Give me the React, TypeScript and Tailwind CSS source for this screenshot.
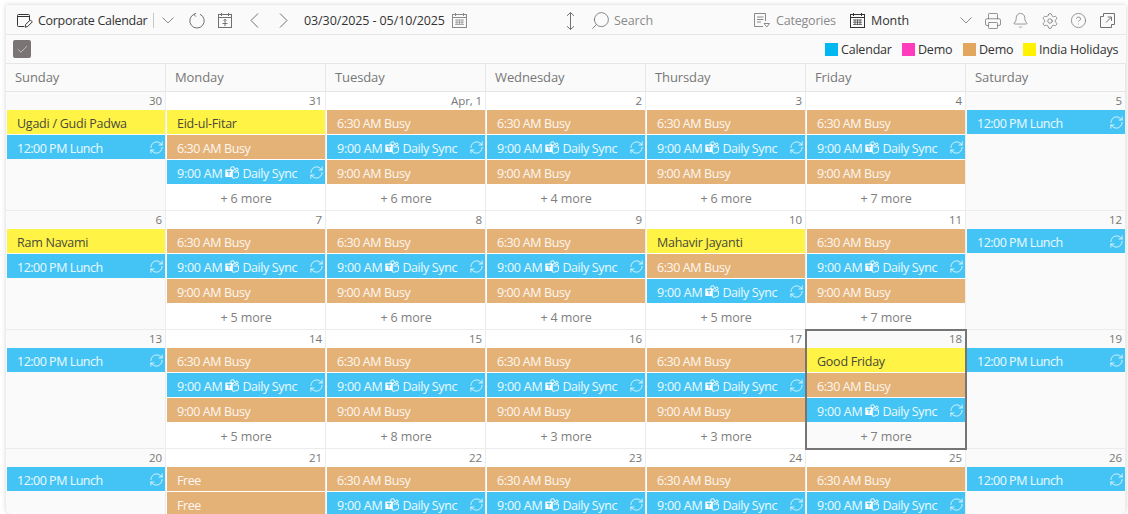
import React from "react";
import { Search, Printer, Bell, Settings, CircleHelp, RefreshCw, Check } from "lucide-react";

const Teams = () => (
  <svg width="14" height="14" viewBox="0 0 14 14" className="ml-[3px] mr-[3px] mt-[2px] shrink-0" fill="none">
    <circle cx="7.6" cy="2.6" r="1.9" stroke="#fff" strokeWidth="1" />
    <circle cx="11.8" cy="3.4" r="1.3" stroke="#fff" strokeWidth="1" />
    <path d="M8.5 6h5v3.6a2.4 2.4 0 0 1-4 1.6" stroke="#fff" strokeWidth="1" />
    <path d="M6.5 5.5v4.2a3 3 0 0 0 3 2.8" stroke="#fff" strokeWidth="1" />
    <rect x="0.3" y="3.5" width="7.5" height="7.5" rx="0.6" fill="#fff" />
    <path d="M2 5.4h4M4 5.4v4" stroke="#43c4f5" strokeWidth="1.1" />
  </svg>
);

const EditCal = () => (
  <svg width="16" height="14" viewBox="0 0 16 14" fill="none" stroke="#333" strokeWidth="1" className="shrink-0">
    <path d="M7 12.5H1.5a1 1 0 0 1-1-1V1.5a1 1 0 0 1 1-1h10a1 1 0 0 1 1 1V6" />
    <path d="M.5 2.5h12" />
    <path d="M8 13.2l.7-2.7 4.6-4.6 2 2-4.6 4.6z" />
  </svg>
);

const Reload = () => (
  <svg width="16" height="16" viewBox="0 0 16 16" fill="none" stroke="#707070" strokeWidth="1" className="shrink-0">
    <path d="M5.2 1.2A7.2 7.2 0 1 0 11 1.3" />
    <path d="M7.2 0 5 1.4 6.8 3.6" />
  </svg>
);

const Today = () => (
  <svg width="14" height="15" viewBox="0 0 14 15" fill="none" stroke="#707070" strokeWidth="1" className="shrink-0">
    <rect x=".5" y="1.5" width="13" height="13" />
    <path d="M.5 4.5h13M3.5 0v3M10.5 0v3" />
    <circle cx="7" cy="7.4" r="1" />
    <path d="M4.5 10.5h5M7 9.2v4" />
  </svg>
);

const CalGrid = ({ c = "#8a8a8a" }: { c?: string }) => (
  <svg width="15" height="15" viewBox="0 0 15 15" fill="none" stroke={c} strokeWidth="1" className="shrink-0">
    <rect x=".5" y="1.5" width="14" height="13" />
    <path d="M.5 4.5h14M3.5 0v3M11.5 0v3" />
    <path d="M3 7h9M3 9.2h9M3 11.4h9M5 6.5v5.5M7.5 6.5v5.5M10 6.5v5.5" strokeWidth=".7" />
  </svg>
);

const Resize = () => (
  <svg width="9" height="18" viewBox="0 0 9 18" fill="none" stroke="#707070" strokeWidth="1" className="shrink-0">
    <path d="M4.5 .5v17M1 3.8 4.5.5 8 3.8M1 14.2l3.5 3.3L8 14.2" />
  </svg>
);

const Categories = () => (
  <svg width="16" height="16" viewBox="0 0 16 16" fill="none" stroke="#8a8a8a" strokeWidth="1" className="shrink-0">
    <path d="M9 13.5H.5V.5h11V8" />
    <path d="M3 4h6.5M3 6.5h6.5M3 9h4" />
    <path d="M10 10.5h5.5l-2.7 3.5z" />
  </svg>
);

const Popout = () => (
  <svg width="15" height="15" viewBox="0 0 15 15" fill="none" stroke="#707070" strokeWidth="1" className="shrink-0">
    <path d="M3.5 3.5H.5v11h11v-3" />
    <path d="M3.5 3.5v-3h11v11h-3" />
    <path d="M6 9.5 11 4.5M7.7 4h3.8v3.8" />
  </svg>
);

const ChevDown = ({ className }: { className: string }) => (
  <svg width="12" height="7" viewBox="0 0 12 7" fill="none" stroke="#8a8a8a" strokeWidth="1" className={className}>
    <path d="M.5.5 6 6 11.5.5" />
  </svg>
);

const ChevLeft = ({ className }: { className: string }) => (
  <svg width="9" height="15" viewBox="0 0 9 15" fill="none" stroke="#707070" strokeWidth="1" className={className}>
    <path d="M8 .5 1 7.5l7 7" />
  </svg>
);

const ChevRight = ({ className }: { className: string }) => (
  <svg width="9" height="15" viewBox="0 0 9 15" fill="none" stroke="#707070" strokeWidth="1" className={className}>
    <path d="M1 .5l7 7-7 7" />
  </svg>
);

type Ev = { t: "hol" | "busy" | "sync" | "lunch" | "free" | "busy9"; label?: string };
type Cell = { d: string; ev: Ev[]; more?: number; weekend?: boolean; sel?: boolean };

const B: Ev = { t: "busy" };
const S: Ev = { t: "sync" };
const N: Ev = { t: "busy9" };
const L: Ev = { t: "lunch" };
const F: Ev = { t: "free" };
const H = (label: string): Ev => ({ t: "hol", label });
const std = [B, S, N];

const weeks: Cell[][] = [
  [
    { d: "30", ev: [H("Ugadi / Gudi Padwa"), L], weekend: true },
    { d: "31", ev: [H("Eid-ul-Fitar"), B, S], more: 6 },
    { d: "Apr, 1", ev: std, more: 6 },
    { d: "2", ev: std, more: 4 },
    { d: "3", ev: std, more: 6 },
    { d: "4", ev: std, more: 7 },
    { d: "5", ev: [L], weekend: true },
  ],
  [
    { d: "6", ev: [H("Ram Navami"), L], weekend: true },
    { d: "7", ev: std, more: 5 },
    { d: "8", ev: std, more: 6 },
    { d: "9", ev: std, more: 4 },
    { d: "10", ev: [H("Mahavir Jayanti"), B, S], more: 5 },
    { d: "11", ev: std, more: 7 },
    { d: "12", ev: [L], weekend: true },
  ],
  [
    { d: "13", ev: [L], weekend: true },
    { d: "14", ev: std, more: 5 },
    { d: "15", ev: std, more: 8 },
    { d: "16", ev: std, more: 3 },
    { d: "17", ev: std, more: 3 },
    { d: "18", ev: [H("Good Friday"), B, S], more: 7, sel: true },
    { d: "19", ev: [L], weekend: true },
  ],
  [
    { d: "20", ev: [L], weekend: true },
    { d: "21", ev: [F, F] },
    { d: "22", ev: [B, S] },
    { d: "23", ev: [B, S] },
    { d: "24", ev: [B, S] },
    { d: "25", ev: [B, S] },
    { d: "26", ev: [L], weekend: true },
  ],
];

const Sync = () => <RefreshCw size={15} strokeWidth={1.25} color="#fff" className="shrink-0" />;

function Event({ e }: { e: Ev }) {
  if (e.t === "hol")
    return (
      <div className="h-6 mb-px bg-[#fff345] text-[#4a4a3a] flex items-center pl-[10px] pt-[5px] tracking-[-0.25px]">{e.label}</div>
    );
  if (e.t === "lunch")
    return (
      <div className="h-6 mb-px bg-[#43c4f5] text-white/90 flex items-center pl-[10px] pr-[1px] justify-between">
        <span className="pt-[5px] tracking-[-0.5px]">12:00 PM Lunch</span>
        <Sync />
      </div>
    );
  if (e.t === "sync")
    return (
      <div className="h-6 mb-px bg-[#43c4f5] text-white/90 flex items-center pl-[10px] pr-[1px]">
        <span className="pt-[5px] tracking-[-0.25px]">9:00 AM</span>
        <Teams />
        <span className="pt-[5px] tracking-[-0.4px]">Daily Sync</span>
        <span className="ml-auto flex">
          <Sync />
        </span>
      </div>
    );
  const label = e.t === "busy" ? "6:30 AM Busy" : e.t === "busy9" ? "9:00 AM Busy" : "Free";
  return (
    <div className="h-6 mb-px bg-[#e4b177] text-white/90 flex items-center pl-[10px] pt-[5px] tracking-[-0.42px]">{label}</div>
  );
}

function Day({ c }: { c: Cell }) {
  const bg = c.weekend || c.sel ? "bg-[#fafafa]" : "bg-white";
  return (
    <div
      className={`w-40 h-[119px] shrink-0 border-r border-b border-[#ececec] pl-px flex flex-col ${bg} ${
        c.sel ? "outline-2 -outline-offset-1 outline-[#757575] z-10" : ""
      }`}
    >
      <div className="h-[18px] shrink-0 text-right pr-[3px] text-[11.5px] leading-[17px] text-[#777]">{c.d}</div>
      {c.ev.map((e, i) => (
        <Event key={i} e={e} />
      ))}
      {c.more !== undefined && (
        <div className="h-6 pt-[5px] flex items-center justify-center text-[#808080]">+ {c.more} more</div>
      )}
    </div>
  );
}

const Legend = ({ color, label, ml, w }: { color: string; label: string; ml: string; w: string }) => (
  <div className={`flex items-center ${ml}`}>
    <span className={`w-[13px] h-[13px] ${color}`} />
    <span className={`ml-[3px] pt-[2px] text-[#333] text-[12.5px] tracking-[-0.2px] whitespace-nowrap ${w}`}>{label}</span>
  </div>
);

export default function App() {
  const days = ["Sunday", "Monday", "Tuesday", "Wednesday", "Thursday", "Friday", "Saturday"];
  return (
    <div className="w-[1128px] h-[514px] bg-white overflow-hidden pl-[6px] pt-[5px] pb-0 text-[12.5px] font-['Open_Sans','Noto_Sans',sans-serif] tracking-[-0.1px]">
      <div className="w-[1120px] h-[509px] bg-[#fafafa] rounded-b-md overflow-hidden shadow-[0_0_5px_rgba(0,0,0,0.18)]">
        {/* Toolbar */}
        <div className="h-[30px] pt-[2px] flex items-center border-b border-[#e6e6e6] text-[#333]">
          <span className="ml-[11px]"><EditCal /></span>
          <span className="ml-[5px] w-[109px] pt-[2px] whitespace-nowrap tracking-[-0.3px]">Corporate Calendar</span>
          <span className="ml-[6px] w-px h-[15px] bg-[#c8c8c8]" />
          <ChevDown className="ml-[8px] shrink-0" />
          <span className="ml-[15px]"><Reload /></span>
          <span className="ml-[13px]"><Today /></span>
          <ChevLeft className="ml-[18px] shrink-0" />
          <ChevRight className="ml-[20px] shrink-0" />
          <span className="ml-[16px] w-[141px] pt-[2px] whitespace-nowrap">03/30/2025 - 05/10/2025</span>
          <span className="ml-[7px]"><CalGrid /></span>
          <span className="ml-[99px]"><Resize /></span>
          <Search size={21} strokeWidth={0.95} color="#707070" className="ml-[15px] -scale-x-100 shrink-0" />
          <span className="ml-[3px] w-[40px] pt-[2px] text-[#8a8a8a] whitespace-nowrap">Search</span>
          <span className="ml-[100px]"><Categories /></span>
          <span className="ml-[6px] w-[60px] pt-[2px] text-[#8a8a8a] whitespace-nowrap tracking-[-0.2px]">Categories</span>
          <span className="ml-[14px]"><CalGrid c="#333" /></span>
          <span className="ml-[6px] w-[40px] pt-[2px] whitespace-nowrap">Month</span>
          <ChevDown className="ml-[49px] shrink-0" />
          <Printer size={18} strokeWidth={1} color="#707070" className="ml-[12px] shrink-0" />
          <Bell size={17} strokeWidth={1} color="#707070" className="ml-[10px] shrink-0" />
          <Settings size={18} strokeWidth={1} color="#707070" className="ml-[12px] shrink-0" />
          <CircleHelp size={17} strokeWidth={1} color="#707070" className="ml-[11px] shrink-0" />
          <span className="ml-[13px]"><Popout /></span>
        </div>
        {/* Legend row */}
        <div className="h-[29px] flex items-center border-b border-[#e6e6e6]">
          <span className="ml-[7px] w-[18px] h-[18px] rounded-[2px] bg-[#7a7574] flex items-center justify-center">
            <Check size={13} strokeWidth={1} color="#fff" />
          </span>
          <div className="ml-auto flex items-center pr-[8px]">
            <Legend color="bg-[#00b7f1]" label="Calendar" ml="" w="w-[50px]" />
            <Legend color="bg-[#ff3cbe]" label="Demo" ml="ml-[11px]" w="w-[34px]" />
            <Legend color="bg-[#e2a65e]" label="Demo" ml="ml-[11px]" w="w-[33px]" />
            <Legend color="bg-[#fff200]" label="India Holidays" ml="ml-[11px]" w="w-[79px]" />
          </div>
        </div>
        {/* Day header */}
        <div className="h-7 flex border-b border-[#e6e6e6]">
          {days.map((d) => (
            <div key={d} className="w-40 border-r border-[#e6e6e6] pl-[9px] text-[13px] leading-[27px] text-[#777]">
              {d}
            </div>
          ))}
        </div>
        {weeks.map((w, i) => (
          <div key={i} className="flex">
            {w.map((c, j) => (
              <Day key={j} c={c} />
            ))}
          </div>
        ))}
      </div>
    </div>
  );
}
